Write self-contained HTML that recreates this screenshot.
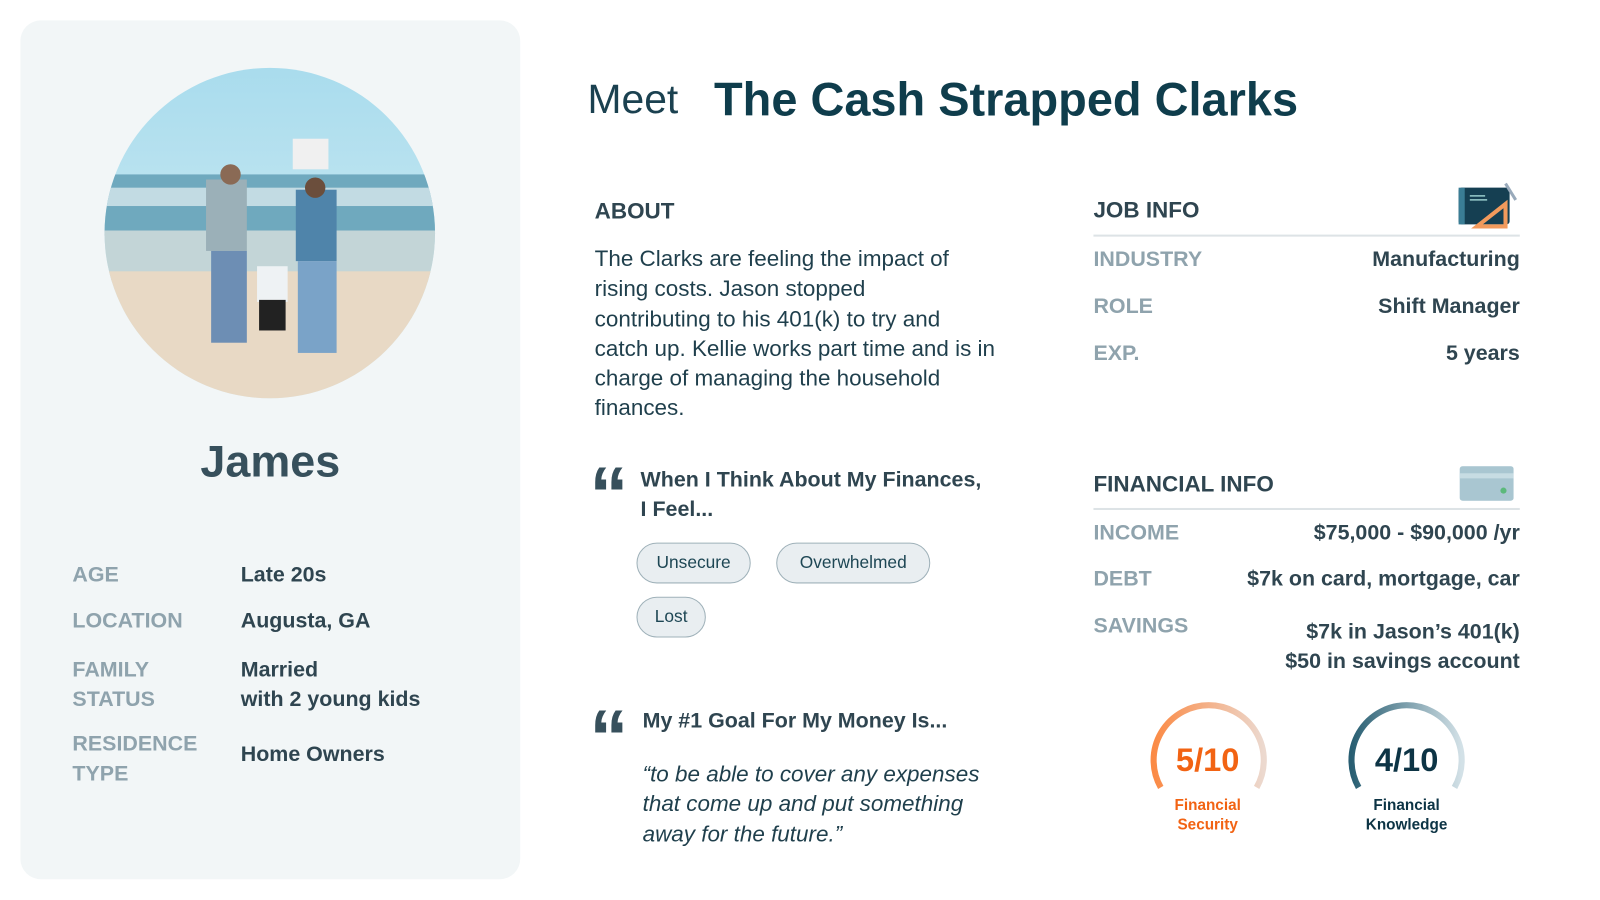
<!DOCTYPE html>
<html><head><meta charset="utf-8"><style>
*{margin:0;padding:0;box-sizing:border-box}
body{width:1600px;height:900px;background:#fff;font-family:"Liberation Sans",sans-serif;overflow:hidden;color:#37505c}
#w{position:absolute;left:0;top:0;width:1570px;height:882px;transform:scale(1.02);transform-origin:0 0}
.a{position:absolute;white-space:nowrap}
.card{position:absolute;left:20px;top:20px;width:490px;height:842px;background:#f2f6f7;border-radius:20px}
.lbl{color:#8fa3ad;font-size:21px;font-weight:bold}
.val{color:#2f4550;font-size:21px;font-weight:bold}
.h{font-size:22px;font-weight:bold;color:#2f4550}
.pill{position:absolute;height:40px;border:1px solid #9fb1b9;border-radius:20px;background:#e9eef1;color:#1d4654;font-size:17px;line-height:38px;text-align:center}
.rv{position:absolute;right:80px;text-align:right;color:#2f4550;font-size:21px;font-weight:bold;white-space:nowrap}
.q{position:absolute;font-family:"Liberation Sans",sans-serif;font-weight:bold;font-size:76px;color:#37505c;line-height:1;letter-spacing:-4px}
</style></head><body><div id="w">
<div class="card"></div>
<svg class="a" style="left:102px;top:66px" width="325" height="325" viewBox="0 0 325 325">
<defs><clipPath id="c"><circle cx="162.5" cy="162.5" r="162"/></clipPath>
<linearGradient id="s" x1="0" y1="0" x2="0" y2="1"><stop offset="0" stop-color="#a9dced"/><stop offset="1" stop-color="#d7eef4"/></linearGradient></defs>
<g clip-path="url(#c)">
<rect width="325" height="325" fill="url(#s)"/>
<rect y="105" width="325" height="60" fill="#6fa9be"/>
<rect y="118" width="325" height="18" fill="#e6f1f2" opacity=".7"/>
<rect y="160" width="325" height="50" fill="#c3d5d7"/>
<rect y="200" width="325" height="125" fill="#e8d9c5"/>
<rect x="100" y="110" width="40" height="70" fill="#9bb0b8"/><rect x="105" y="180" width="35" height="90" fill="#6d8eb4"/>
<circle cx="124" cy="105" r="10" fill="#8a6a55"/>
<rect x="150" y="195" width="30" height="35" fill="#eef2f4"/><rect x="152" y="228" width="26" height="30" fill="#222"/>
<rect x="188" y="120" width="40" height="70" fill="#4f84aa"/><rect x="190" y="190" width="38" height="90" fill="#7aa3c8"/>
<circle cx="207" cy="118" r="10" fill="#6b4e3c"/><rect x="185" y="70" width="35" height="30" fill="#f0f0f0"/>
</g></svg>
<div class="a" style="left:0;width:530px;text-align:center;top:428px;font-size:44px;font-weight:bold;color:#37505c">James</div>
<div class="a lbl" style="left:71px;top:552px">AGE</div><div class="a val" style="left:236px;top:552px">Late 20s</div>
<div class="a lbl" style="left:71px;top:597px">LOCATION</div><div class="a val" style="left:236px;top:597px">Augusta, GA</div>
<div class="a lbl" style="left:71px;top:642px;line-height:29px">FAMILY<br>STATUS</div><div class="a val" style="left:236px;top:642px;line-height:29px">Married<br>with 2 young kids</div>
<div class="a lbl" style="left:71px;top:715px;line-height:29px">RESIDENCE<br>TYPE</div><div class="a val" style="left:236px;top:728px">Home Owners</div>

<div class="a" style="left:576px;top:76px;font-size:40px;color:#1b4150">Meet</div>
<div class="a" style="left:700px;top:70px;font-size:46px;font-weight:bold;color:#0f3d4c">The Cash Strapped Clarks</div>

<div class="a h" style="left:583px;top:194px">ABOUT</div>
<div class="a" style="left:583px;top:239px;font-size:22px;line-height:29.3px;color:#1f3f4c">The Clarks are feeling the impact of<br>rising costs. Jason stopped<br>contributing to his 401(k) to try and<br>catch up. Kellie works part time and is in<br>charge of managing the household<br>finances.</div>

<div class="q" style="left:578px;top:448px">“</div>
<div class="a h" style="left:628px;top:456px;font-size:21px;line-height:29px">When I Think About My Finances,<br>I Feel...</div>
<div class="pill" style="left:624px;top:532px;width:112px">Unsecure</div>
<div class="pill" style="left:761px;top:532px;width:151px">Overwhelmed</div>
<div class="pill" style="left:624px;top:585px;width:68px">Lost</div>

<div class="q" style="left:578px;top:686px">“</div>
<div class="a h" style="left:630px;top:695px;font-size:21px">My #1 Goal For My Money Is...</div>
<div class="a" style="left:630px;top:744px;font-size:22px;line-height:29.3px;font-style:italic;color:#1f3f4c">“to be able to cover any expenses<br>that come up and put something<br>away for the future.”</div>

<div class="a h" style="left:1072px;top:193px">JOB INFO</div>
<svg class="a" style="left:1428px;top:176px" width="62" height="48" viewBox="0 0 62 48"><rect x="2" y="8" width="50" height="36" rx="3" fill="#153f52"/><rect x="2" y="8" width="6" height="36" fill="#3a7d95"/><line x1="13" y1="16" x2="28" y2="16" stroke="#9cc" stroke-width="1.5"/><line x1="13" y1="20" x2="30" y2="20" stroke="#9cc" stroke-width="1.5"/><path d="M20 46 L48 24 L48 46 Z" fill="none" stroke="#f29a5c" stroke-width="4"/><path d="M48 4 L58 20" stroke="#9ab" stroke-width="3"/></svg>
<div class="a" style="left:1072px;top:230px;width:418px;height:2px;background:#dde3e6"></div>
<div class="a lbl" style="left:1072px;top:243px">INDUSTRY</div><div class="rv" style="top:243px">Manufacturing</div>
<div class="a lbl" style="left:1072px;top:289px">ROLE</div><div class="rv" style="top:289px">Shift Manager</div>
<div class="a lbl" style="left:1072px;top:335px">EXP.</div><div class="rv" style="top:335px">5 years</div>

<div class="a h" style="left:1072px;top:462px">FINANCIAL INFO</div>
<svg class="a" style="left:1431px;top:457px" width="53" height="34" viewBox="0 0 53 34"><rect width="53" height="34" rx="3" fill="#a9c6d1"/><rect y="7" width="53" height="5" fill="#c7dce3"/><circle cx="43" cy="24" r="3" fill="#5bb97b"/></svg>
<div class="a" style="left:1072px;top:498px;width:418px;height:2px;background:#dde3e6"></div>
<div class="a lbl" style="left:1072px;top:511px">INCOME</div><div class="rv" style="top:511px">$75,000 - $90,000 /yr</div>
<div class="a lbl" style="left:1072px;top:556px">DEBT</div><div class="rv" style="top:556px">$7k on card, mortgage, car</div>
<div class="a lbl" style="left:1072px;top:602px">SAVINGS</div><div class="rv" style="top:605px;line-height:29px">$7k in Jason’s 401(k)<br>$50 in savings account</div>

<svg class="a" style="left:1120px;top:686px" width="330" height="100" viewBox="0 0 330 100">
<defs><linearGradient id="o" x1="0" x2="1"><stop offset="0" stop-color="#fb8a45"/><stop offset="1" stop-color="#ecd9cf"/></linearGradient>
<linearGradient id="b" x1="0" x2="1"><stop offset="0" stop-color="#285e72"/><stop offset="1" stop-color="#d3e1e7"/></linearGradient></defs>
<path d="M18 86 A54 54 0 1 1 112 86" fill="none" stroke="url(#o)" stroke-width="6"/>
<path d="M212 86 A54 54 0 1 1 306 86" fill="none" stroke="url(#b)" stroke-width="6"/>
</svg>
<div class="a" style="left:1124px;top:727px;width:120px;text-align:center;font-size:32px;font-weight:bold;color:#f26313">5/10</div>
<div class="a" style="left:1319px;top:727px;width:120px;text-align:center;font-size:32px;font-weight:bold;color:#0d3445">4/10</div>
<div class="a" style="left:1124px;top:780px;width:120px;text-align:center;font-size:15px;line-height:19px;font-weight:bold;color:#f26313">Financial<br>Security</div>
<div class="a" style="left:1319px;top:780px;width:120px;text-align:center;font-size:15px;line-height:19px;font-weight:bold;color:#0d3445">Financial<br>Knowledge</div>
</div></body></html>
